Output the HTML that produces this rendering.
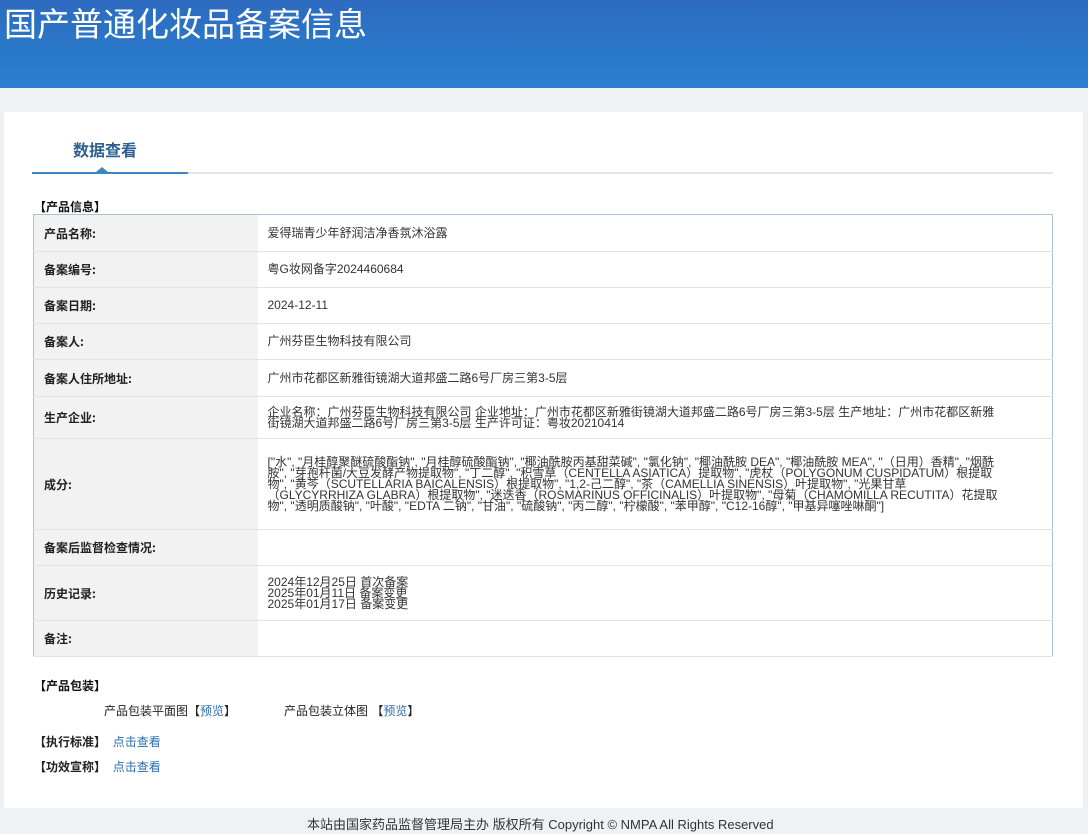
<!DOCTYPE html>
<html><head><meta charset="utf-8"><style>
*{margin:0;padding:0;box-sizing:border-box}
body{width:1088px;height:834px;background:#eef2f5;font-family:"Liberation Sans","Noto Sans CJK SC",sans-serif;color:#333;font-size:12px;position:relative;overflow:hidden}
.hdr{position:absolute;left:0;top:0;width:1088px;height:88px;background:linear-gradient(180deg,#2d6bbf 0%,#2a78c9 60%,#2b7fd0 100%)}
.hdr h1{position:absolute;left:4px;top:2px;font-size:33px;font-weight:normal;color:#fff;font-family:"Noto Sans CJK SC",sans-serif;line-height:40px}
.panel{position:absolute;left:4px;top:112px;width:1079px;height:696px;background:#fff}
.tab{position:absolute;left:73px;top:137px;font-size:16px;font-weight:bold;color:#2d5f93;font-family:"Noto Sans CJK SC",sans-serif}
.line{position:absolute;left:32px;top:172px;width:1021px;height:2px;background:#e6e6e6}
.line2{position:absolute;left:32px;top:172px;width:156px;height:2px;background:#3a86c4}
.tri{position:absolute;left:96px;top:167px;width:0;height:0;border-left:6px solid transparent;border-right:6px solid transparent;border-bottom:5px solid #3a86c4}
.sec{position:absolute;left:34px;font-size:12px;font-weight:bold;color:#111;font-family:"Noto Sans CJK SC",sans-serif}
table{position:absolute;left:33px;top:214px;width:1020px;border-collapse:collapse;border:1px solid #a9c2dc}
td{border-bottom:1px solid #e4e4e4;font-size:12px;vertical-align:middle;line-height:11px}
td.l{width:224px;background:#f2f2f2;padding-left:10px;font-weight:bold;font-size:12px;color:#222;font-family:"Noto Sans CJK SC",sans-serif}
td.v{padding:0 50px 0 10px;color:#333}
.txt{position:absolute;font-size:12px;color:#222}
a{color:#2a6ead;text-decoration:none}
.ft{position:absolute;top:814px;left:307px;font-size:13px;color:#333;white-space:nowrap}
</style></head><body>
<div class="hdr"><h1>国产普通化妆品备案信息</h1></div>
<div class="panel"></div>
<div class="tab">数据查看</div>
<div class="line"></div><div class="line2"></div><div class="tri"></div>
<div class="sec" style="top:198px">【产品信息】</div>
<table>
<tr style="height:37px"><td class="l">产品名称:</td><td class="v">爱得瑞青少年舒润洁净香氛沐浴露</td></tr>
<tr style="height:36px"><td class="l">备案编号:</td><td class="v">粤G妆网备字2024460684</td></tr>
<tr style="height:36px"><td class="l">备案日期:</td><td class="v">2024-12-11</td></tr>
<tr style="height:36px"><td class="l">备案人:</td><td class="v">广州芬臣生物科技有限公司</td></tr>
<tr style="height:37px"><td class="l">备案人住所地址:</td><td class="v">广州市花都区新雅街镜湖大道邦盛二路6号厂房三第3-5层</td></tr>
<tr style="height:42px"><td class="l">生产企业:</td><td class="v">企业名称：广州芬臣生物科技有限公司 企业地址：广州市花都区新雅街镜湖大道邦盛二路6号厂房三第3-5层 生产地址：广州市花都区新雅街镜湖大道邦盛二路6号厂房三第3-5层 生产许可证：粤妆20210414</td></tr>
<tr style="height:91px"><td class="l">成分:</td><td class="v">["水", "月桂醇聚醚硫酸酯钠", "月桂醇硫酸酯钠", "椰油酰胺丙基甜菜碱", "氯化钠", "椰油酰胺 DEA", "椰油酰胺 MEA", "（日用）香精", "烟酰胺", "芽孢杆菌/大豆发酵产物提取物", "丁二醇", "积雪草（CENTELLA ASIATICA）提取物", "虎杖（POLYGONUM CUSPIDATUM）根提取物", "黄芩（SCUTELLARIA BAICALENSIS）根提取物", "1,2-己二醇", "茶（CAMELLIA SINENSIS）叶提取物", "光果甘草（GLYCYRRHIZA GLABRA）根提取物", "迷迭香（ROSMARINUS OFFICINALIS）叶提取物", "母菊（CHAMOMILLA RECUTITA）花提取物", "透明质酸钠", "叶酸", "EDTA 二钠", "甘油", "硫酸钠", "丙二醇", "柠檬酸", "苯甲醇", "C12-16醇", "甲基异噻唑啉酮"]</td></tr>
<tr style="height:36px"><td class="l">备案后监督检查情况:</td><td class="v"></td></tr>
<tr style="height:55px"><td class="l">历史记录:</td><td class="v">2024年12月25日 首次备案<br>2025年01月11日 备案变更<br>2025年01月17日 备案变更</td></tr>
<tr style="height:36px"><td class="l">备注:</td><td class="v"></td></tr>
</table>
<div class="sec" style="top:677px">【产品包装】</div>
<div class="txt" style="left:104px;top:702px">产品包装平面图【<a>预览</a>】</div>
<div class="txt" style="left:284px;top:702px">产品包装立体图 【<a>预览</a>】</div>
<div class="txt" style="left:34px;top:733px"><b>【执行标准】</b> &nbsp;<a>点击查看</a></div>
<div class="txt" style="left:34px;top:758px"><b>【功效宣称】</b> &nbsp;<a>点击查看</a></div>
<div class="ft">本站由国家药品监督管理局主办 版权所有 Copyright © NMPA All Rights Reserved</div>
</body></html>
